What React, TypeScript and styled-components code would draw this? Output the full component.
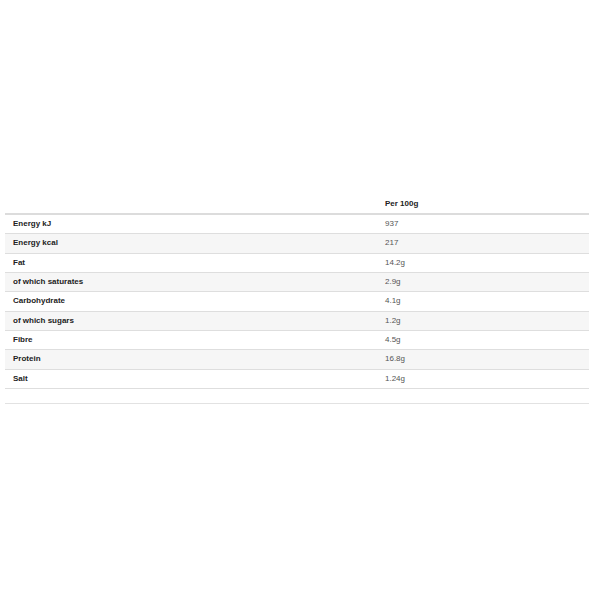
import React from "react";
import styled, { createGlobalStyle } from "styled-components";

const Global = createGlobalStyle`
  html, body { margin: 0; padding: 0; background: #fff; }
  body { font-family: "Liberation Sans", Arial, sans-serif; }
`;

const Page = styled.div`
  width: 600px;
  height: 600px;
  padding: 195px 11px 0 5px;
  box-sizing: border-box;
`;

const Table = styled.div`
  display: flex;
  flex-direction: column;
`;

const Row = styled.div<{ $striped?: boolean; $head?: boolean }>`
  display: grid;
  grid-template-columns: 372px 1fr;
  align-items: center;
  box-sizing: border-box;
  height: ${(p) => (p.$head ? "20px" : "19.33px")};
  border-bottom: ${(p) => (p.$head ? "2px solid #dcdcdc" : "1px solid #dedede")};
  background: ${(p) => (p.$striped ? "#f6f6f6" : "#fff")};
`;

const Cell = styled.div<{ $label?: boolean }>`
  padding: 0 8px;
  font-size: 8px;
  line-height: 10px;
  font-weight: ${(p) => (p.$label ? 700 : 400)};
  color: ${(p) => (p.$label ? "#222" : "#555")};
  white-space: nowrap;
`;

const HeadCell = styled(Cell)`
  font-weight: 700;
  color: #222;
`;

const Footer = styled.div`
  margin-top: 14px;
  border-top: 1px solid #e2e2e2;
`;

const rows: [string, string][] = [
  ["Energy kJ", "937"],
  ["Energy kcal", "217"],
  ["Fat", "14.2g"],
  ["of which saturates", "2.9g"],
  ["Carbohydrate", "4.1g"],
  ["of which sugars", "1.2g"],
  ["Fibre", "4.5g"],
  ["Protein", "16.8g"],
  ["Salt", "1.24g"],
];

export default function App() {
  return (
    <>
      <Global />
      <Page>
        <Table>
          <Row $head>
            <HeadCell />
            <HeadCell>Per 100g</HeadCell>
          </Row>
          {rows.map(([label, value], i) => (
            <Row key={label} $striped={i % 2 === 1}>
              <Cell $label>{label}</Cell>
              <Cell>{value}</Cell>
            </Row>
          ))}
        </Table>
        <Footer />
      </Page>
    </>
  );
}
